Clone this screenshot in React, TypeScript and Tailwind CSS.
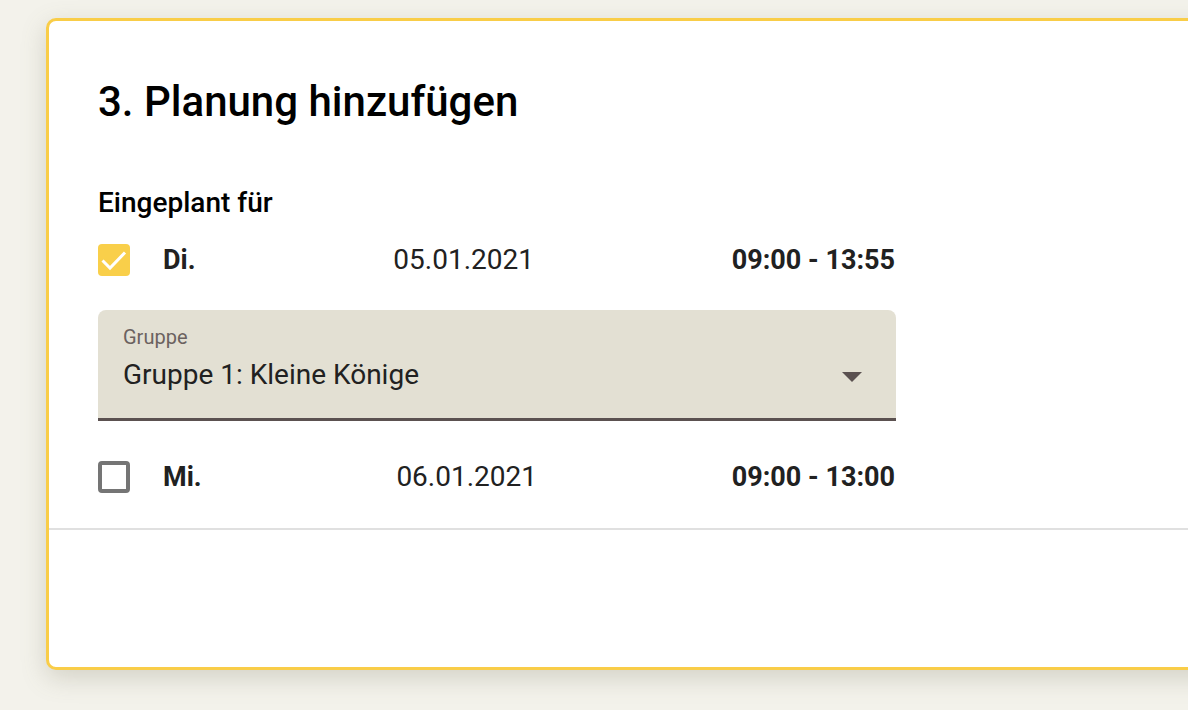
import React from "react";

function Checkbox({ checked }: { checked: boolean }) {
  if (checked) {
    return (
      <div className="h-8 w-8 shrink-0 rounded-[4px] bg-[#f9cf4a]">
        <svg className="h-8 w-8" viewBox="0 0 32 32" fill="none" stroke="white" strokeWidth={3}>
          <path d="M4.5 16.5l7.5 7.5L27 8.5" />
        </svg>
      </div>
    );
  }
  return <div className="h-8 w-8 shrink-0 rounded-[4px] border-[4px] border-[#757575] bg-white" />;
}

function DayRow({ checked, day, date, time }: { checked: boolean; day: string; date: string; time: string }) {
  return (
    <div className="flex w-[797px] items-center">
      <Checkbox checked={checked} />
      <div className="ml-[33px] flex flex-1 items-center justify-between leading-8 text-[#212121]">
        <span className="text-[27px] font-bold">{day}</span>
        <span className="text-[28px]">{date}</span>
        <span className="text-[27px] font-bold">{time}</span>
      </div>
    </div>
  );
}

export default function App() {
  return (
    <div
      className="min-h-[710px] w-full overflow-hidden bg-[#f3f2eb] pl-[46px] pt-[18px]"
      style={{ fontFamily: "Roboto, 'Liberation Sans', sans-serif" }}
    >
      <div className="h-[652px] w-[1300px] rounded-[10px] border-[3px] border-[#f9cd48] bg-white shadow-[0_8px_24px_rgba(120,115,90,0.25)]">
        <div className="pl-[49px] pt-[56px] pb-[35px]">
          <h2 className="text-[42px] font-medium leading-[50px] text-black">3. Planung hinzufügen</h2>
          <p className="mt-[60px] text-[28px] font-medium leading-8 text-black">Eingeplant für</p>

          <div className="mt-[25px]">
            <DayRow checked day="Di." date="05.01.2021" time="09:00 - 13:55" />
          </div>

          <div className="mt-[34px] flex h-[111px] w-[798px] items-start justify-between rounded-t-[8px] border-b-[3px] border-[#5b5150] bg-[#e3e0d3] pl-[25px] pr-[34px]">
            <div className="pt-[15px]">
              <div className="text-[20px] leading-6 text-[#6b625f]">Gruppe</div>
              <div className="mt-[10px] text-[28px] leading-8 text-[#212121]">Gruppe 1: Kleine Könige</div>
            </div>
            <svg className="mt-[62px] h-[10px] w-[20px]" viewBox="0 0 20 10">
              <path d="M0 0h20L10 10z" fill="#5b5150" />
            </svg>
          </div>

          <div className="mt-[40px]">
            <DayRow checked={false} day="Mi." date="06.01.2021" time="09:00 - 13:00" />
          </div>
        </div>
        <div className="border-t-2 border-[#e0e0e0]" />
      </div>
    </div>
  );
}
